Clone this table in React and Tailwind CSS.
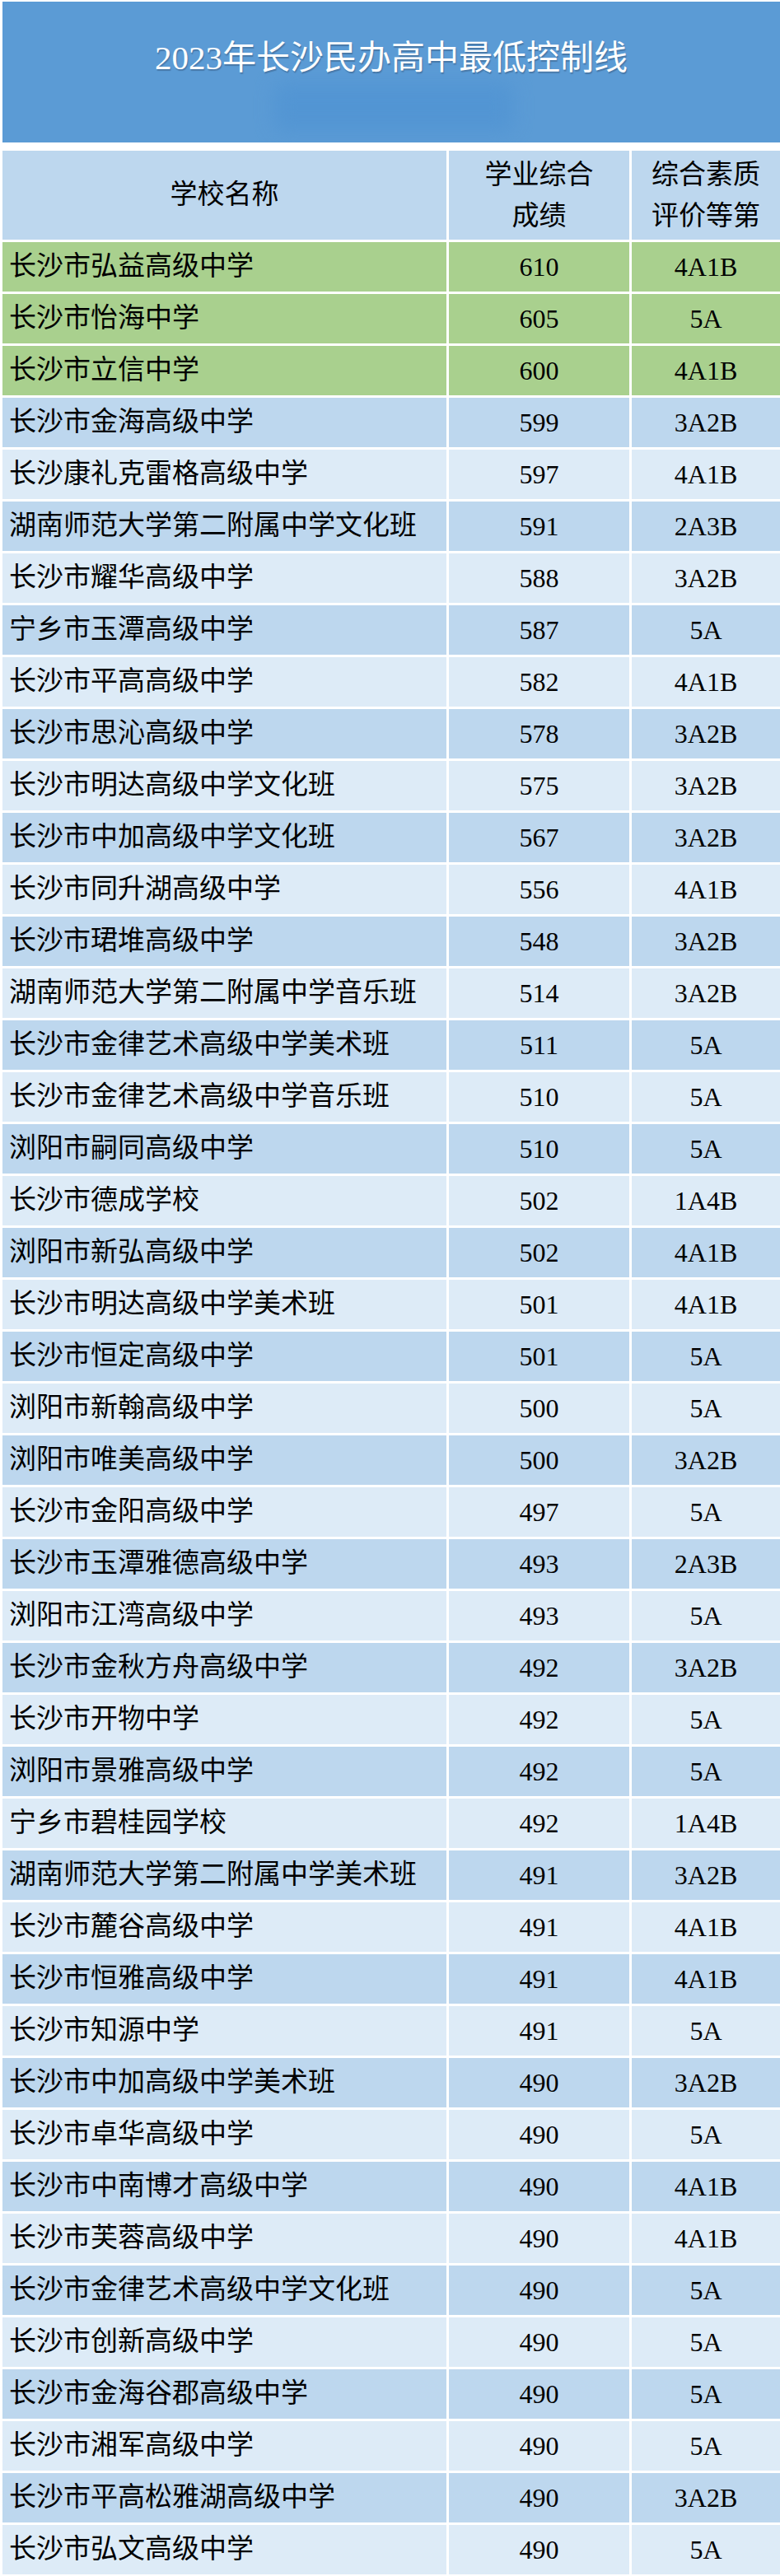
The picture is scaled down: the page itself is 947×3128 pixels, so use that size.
const rows = [
  ["长沙市弘益高级中学", "610", "4A1B"],
  ["长沙市怡海中学", "605", "5A"],
  ["长沙市立信中学", "600", "4A1B"],
  ["长沙市金海高级中学", "599", "3A2B"],
  ["长沙康礼克雷格高级中学", "597", "4A1B"],
  ["湖南师范大学第二附属中学文化班", "591", "2A3B"],
  ["长沙市耀华高级中学", "588", "3A2B"],
  ["宁乡市玉潭高级中学", "587", "5A"],
  ["长沙市平高高级中学", "582", "4A1B"],
  ["长沙市思沁高级中学", "578", "3A2B"],
  ["长沙市明达高级中学文化班", "575", "3A2B"],
  ["长沙市中加高级中学文化班", "567", "3A2B"],
  ["长沙市同升湖高级中学", "556", "4A1B"],
  ["长沙市珺堆高级中学", "548", "3A2B"],
  ["湖南师范大学第二附属中学音乐班", "514", "3A2B"],
  ["长沙市金律艺术高级中学美术班", "511", "5A"],
  ["长沙市金律艺术高级中学音乐班", "510", "5A"],
  ["浏阳市嗣同高级中学", "510", "5A"],
  ["长沙市德成学校", "502", "1A4B"],
  ["浏阳市新弘高级中学", "502", "4A1B"],
  ["长沙市明达高级中学美术班", "501", "4A1B"],
  ["长沙市恒定高级中学", "501", "5A"],
  ["浏阳市新翰高级中学", "500", "5A"],
  ["浏阳市唯美高级中学", "500", "3A2B"],
  ["长沙市金阳高级中学", "497", "5A"],
  ["长沙市玉潭雅德高级中学", "493", "2A3B"],
  ["浏阳市江湾高级中学", "493", "5A"],
  ["长沙市金秋方舟高级中学", "492", "3A2B"],
  ["长沙市开物中学", "492", "5A"],
  ["浏阳市景雅高级中学", "492", "5A"],
  ["宁乡市碧桂园学校", "492", "1A4B"],
  ["湖南师范大学第二附属中学美术班", "491", "3A2B"],
  ["长沙市麓谷高级中学", "491", "4A1B"],
  ["长沙市恒雅高级中学", "491", "4A1B"],
  ["长沙市知源中学", "491", "5A"],
  ["长沙市中加高级中学美术班", "490", "3A2B"],
  ["长沙市卓华高级中学", "490", "5A"],
  ["长沙市中南博才高级中学", "490", "4A1B"],
  ["长沙市芙蓉高级中学", "490", "4A1B"],
  ["长沙市金律艺术高级中学文化班", "490", "5A"],
  ["长沙市创新高级中学", "490", "5A"],
  ["长沙市金海谷郡高级中学", "490", "5A"],
  ["长沙市湘军高级中学", "490", "5A"],
  ["长沙市平高松雅湖高级中学", "490", "3A2B"],
  ["长沙市弘文高级中学", "490", "5A"],
]

function rowColor(i) {
  if (i < 3) return "bg-[#a9d08e]"
  return i % 2 === 1 ? "bg-[#bdd7ee]" : "bg-[#ddebf7]"
}

export default function App() {
  return (
    <div className="w-[947px] h-[3128px] bg-white pl-[3px] pt-[2px] text-black font-['Liberation_Serif','Noto_Sans_CJK_SC',serif] overflow-hidden">
      <div className="relative h-[171px] bg-[#5b9bd5] overflow-hidden">
        <div className="absolute left-[330px] top-[98px] w-[290px] h-[60px] rounded-lg bg-[#4f93d3] blur-md opacity-70"></div>
        <h1 className="relative pt-[42px] text-center text-[41px] leading-[52px] text-white [text-shadow:1px_2px_1px_rgba(40,60,90,0.35)]">
          2023年长沙民办高中最低控制线
        </h1>
      </div>

      <div className="mt-[10px] grid grid-cols-[539px_219px_180px] gap-x-[3px] gap-y-[3px] text-[33px]">
        <div className="h-[108px] bg-[#bdd7ee] flex items-center justify-center">学校名称</div>
        <div className="h-[108px] bg-[#bdd7ee] flex flex-col items-center justify-center leading-[50px]">
          <span>学业综合</span>
          <span>成绩</span>
        </div>
        <div className="h-[108px] bg-[#bdd7ee] flex flex-col items-center justify-center leading-[50px]">
          <span>综合素质</span>
          <span>评价等第</span>
        </div>

        {rows.map(([name, score, grade], i) => (
          <div key={i} className="contents">
            <div className={`h-[60px] ${rowColor(i)} flex items-center pl-[8px] whitespace-nowrap`}>{name}</div>
            <div className={`h-[60px] ${rowColor(i)} flex items-center justify-center text-[32px]`}>{score}</div>
            <div className={`h-[60px] ${rowColor(i)} flex items-center justify-center text-[32px]`}>{grade}</div>
          </div>
        ))}
      </div>
    </div>
  )
}
